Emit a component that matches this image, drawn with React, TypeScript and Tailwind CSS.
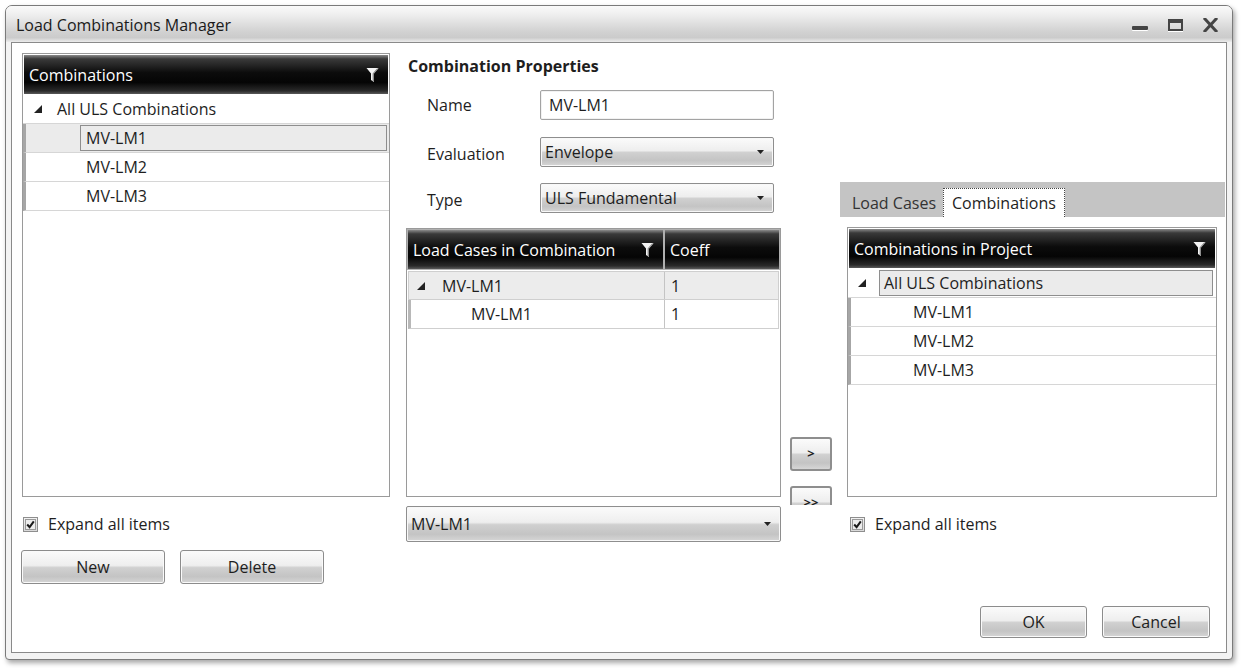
import React from 'react';

const font = { fontFamily: '"Open Sans", "Noto Sans", "Liberation Sans", sans-serif' };

const headBg =
  'bg-[linear-gradient(to_bottom,#8a8a8a_0%,#3a3a3a_10%,#0c0c0c_45%,#050505_70%,#2a2a2a_92%,#5a5a5a_100%)]';
const glossBg =
  'bg-[linear-gradient(to_bottom,#fbfbfb_0%,#eeeeee_45%,#d0d0d0_52%,#c4c4c4_80%,#d6d6d6_100%)]';

function Funnel() {
  return (
    <svg width="13" height="16" viewBox="0 0 13 16">
      <path d="M0.5 1 H12.5 L8 6.5 V15 L5 13 V6.5 Z" fill="#f4f4f4" />
      <path d="M8 6.5 V15 L6.6 14 V6.5 L11 1.6 H12.5 Z" fill="#8e8e8e" />
    </svg>
  );
}

function Expander() {
  return (
    <svg width="8" height="8" viewBox="0 0 8 8">
      <polygon points="8,0 8,8 0,8" fill="#222" />
    </svg>
  );
}

function GridHeader({ title, filter = true }: { title: string; filter?: boolean }) {
  return (
    <div className={`${headBg} h-[39px] flex items-center justify-between pl-[5px] pr-[9px] text-white text-[16px]`}>
      <span>{title}</span>
      {filter && <Funnel />}
    </div>
  );
}

function Checkbox({ label }: { label: string }) {
  return (
    <div className="flex items-center gap-[10px] h-[16px] text-[16px] text-[#1e1e1e]">
      <div className="w-[15px] h-[15px] border border-[#8e8e8e] bg-[linear-gradient(to_bottom,#f2f2f2,#d9d9d9)] flex items-center justify-center p-[1px]">
        <div className="w-full h-full border border-[#9a9a9a] bg-[#ededed] flex items-center justify-center">
          <svg width="9" height="9" viewBox="0 0 9 9">
            <path d="M1.2 4.5 L3.6 7.2 L7.8 1.3" stroke="#1a1a1a" strokeWidth="2" fill="none" />
          </svg>
        </div>
      </div>
      <span>{label}</span>
    </div>
  );
}

function Button({ label, w }: { label: string; w: string }) {
  return (
    <div
      className={`${w} h-full ${glossBg} border border-[#8c8c8c] rounded-[3px] flex items-center justify-center text-[16px] text-[#1e1e1e] shadow-[inset_0_0_0_1px_#fafafa]`}
    >
      {label}
    </div>
  );
}

function Combo({ value, cls }: { value: string; cls: string }) {
  return (
    <div
      className={`${cls} ${glossBg} border border-[#8e8e8e] rounded-[2px] flex items-center justify-between pl-[4px] pr-[9px] text-[16px] text-[#1e1e1e] shadow-[inset_0_0_0_1px_#f8f8f8]`}
    >
      <span>{value}</span>
      <svg width="7" height="4" viewBox="0 0 7 4">
        <polygon points="0,0 7,0 3.5,4" fill="#222" />
      </svg>
    </div>
  );
}

function WindowControls() {
  return (
    <div className="flex items-center gap-[20px] pr-[14px] pt-[2px]">
      <div className="w-[16px] h-[4px] bg-[#444] rounded-[1px] shadow-[0_1px_0_#fff] mt-[6px]" />
      <div className="w-[15px] h-[12px] border-2 border-t-[4px] border-[#444] shadow-[0_1px_0_#fff]" />
      <svg width="15" height="14" viewBox="0 0 15 14">
        <path d="M2 1 L13 13 M13 1 L2 13" stroke="#444" strokeWidth="3" strokeLinecap="square" />
      </svg>
    </div>
  );
}

// tree row used by the combination lists
function ChildRow({ name, selected = false, indent }: { name: string; selected?: boolean; indent: string }) {
  return (
    <div
      className={`h-[29px] flex border-b border-[#d6d6d6] border-l-[3px] border-l-[#a6a6a6] ${selected ? 'bg-[#ebebeb]' : 'bg-white'}`}
    >
      <div className={`${indent} shrink-0`} />
      <div
        className={`flex-1 flex items-center pl-[5px] mr-[2px] my-[1px] ${selected ? 'border border-[#8e8e8e] bg-[#ebebeb]' : 'border border-transparent'}`}
      >
        {name}
      </div>
    </div>
  );
}

export default function App() {
  return (
    <div className="w-[1241px] h-[668px] bg-white overflow-hidden text-[#1e1e1e]" style={font}>
      <div className="ml-[5px] mt-[5px] w-[1228px] h-[655px] flex flex-col rounded-t-[7px] rounded-b-[4px] border border-[#7a7a7a] bg-[#f3f3f3] shadow-[2px_3px_5px_rgba(0,0,0,0.35)]">
        {/* title bar */}
        <div className="h-[36px] shrink-0 flex items-center justify-between rounded-t-[6px] bg-[linear-gradient(to_bottom,#fafafa_0%,#eeeeee_25%,#d2d2d2_70%,#cbcbcb_88%,#ececec_100%)]">
          <span className="pl-[10px] pt-[2px] text-[16px] text-[#1a1a1a]">Load Combinations Manager</span>
          <WindowControls />
        </div>

        <div className="flex-1 mx-[5px] mb-[6px] border border-[#8a8a8a] bg-white flex pt-[10px] pl-[10px]">
          {/* left: combination tree */}
          <div className="w-[368px] flex flex-col">
            <div className="h-[444px] border border-[#9a9a9a] flex flex-col text-[16px]">
              <div className="p-[1px]">
                <GridHeader title="Combinations" />
              </div>
              <div className="h-[29px] flex items-center border-b border-[#d6d6d6] pl-[11px] gap-[15px]">
                <Expander />
                <span>All ULS Combinations</span>
              </div>
              <ChildRow name="MV-LM1" selected indent="w-[54px]" />
              <ChildRow name="MV-LM2" indent="w-[54px]" />
              <ChildRow name="MV-LM3" indent="w-[54px]" />
            </div>
            <div className="mt-[19px] ml-[1px]">
              <Checkbox label="Expand all items" />
            </div>
            <div className="mt-[18px] h-[34px] flex gap-[15px] -ml-[1px]">
              <Button label="New" w="w-[144px]" />
              <Button label="Delete" w="w-[144px]" />
            </div>
          </div>

          {/* middle: properties */}
          <div className="ml-[16px] w-[375px] flex flex-col text-[16px]">
            <div className="mt-[1px] h-[22px] font-bold pl-[2px]">Combination Properties</div>
            <div className="mt-[14px] flex items-center">
              <span className="w-[134px] pl-[21px]">Name</span>
              <div className="w-[234px] h-[30px] border border-[#a3a3a3] rounded-[2px] flex items-center pl-[8px] shadow-[inset_0_0_0_1px_#f2f2f2]">
                MV-LM1
              </div>
            </div>
            <div className="mt-[17px] flex items-center">
              <span className="w-[134px] pl-[21px] pt-[4px]">Evaluation</span>
              <Combo value="Envelope" cls="w-[234px] h-[30px]" />
            </div>
            <div className="mt-[16px] flex items-center">
              <span className="w-[134px] pl-[21px] pt-[4px]">Type</span>
              <Combo value="ULS Fundamental" cls="w-[234px] h-[30px]" />
            </div>
            <div className="mt-[15px] h-[269px] border border-[#9a9a9a] flex flex-col">
              <div className="flex p-[1px] gap-[2px] bg-[#b0b0b0]">
                <div className="w-[255px]">
                  <GridHeader title="Load Cases in Combination" />
                </div>
                <div className="flex-1">
                  <GridHeader title="Coeff" filter={false} />
                </div>
              </div>
              <div className="h-[29px] flex bg-[#ececec] border border-[#cfcfcf] mx-[1px] mt-[1px]">
                <div className="w-[256px] flex items-center gap-[17px] pl-[8px] border-r border-[#c4c4c4]">
                  <Expander />
                  <span>MV-LM1</span>
                </div>
                <div className="flex-1 flex items-center pl-[6px]">1</div>
              </div>
              <div className="h-[29px] flex bg-white border border-[#cfcfcf] border-t-0 border-l-[3px] border-l-[#b8b8b8] mx-[1px]">
                <div className="w-[254px] flex items-center pl-[60px] border-r border-[#c4c4c4]">MV-LM1</div>
                <div className="flex-1 flex items-center pl-[6px]">1</div>
              </div>
            </div>
            <Combo value="MV-LM1" cls="mt-[9px] w-[375px] h-[36px]" />
          </div>

          {/* move buttons */}
          <div className="ml-[9px] w-[42px] h-[452px] overflow-hidden flex flex-col">
            <div className={`mt-[384px] h-[34px] shrink-0 ${glossBg} border-2 border-[#8e8e8e] rounded-[3px] flex items-center justify-center text-[13px] font-bold`}>
              &gt;
            </div>
            <div className={`mt-[15px] h-[34px] shrink-0 ${glossBg} border-2 border-[#8e8e8e] rounded-[3px] flex items-center justify-center text-[13px] font-bold`}>
              &gt;&gt;
            </div>
          </div>

          {/* right: project lists */}
          <div className="ml-[8px] w-[385px] flex flex-col text-[16px]">
            <div className="mt-[129px] h-[35px] bg-[#c4c4c4] flex items-end pl-[5px]">
              <div className="h-[29px] flex items-center px-[7px] text-[#333]">Load Cases</div>
              <div className="h-[29px] bg-white border border-dotted border-[#444] border-b-0 flex items-center px-[8px]">
                Combinations
              </div>
            </div>
            <div className="mt-[10px] ml-[7px] w-[370px] h-[270px] border border-[#9a9a9a] flex flex-col">
              <div className="p-[1px]">
                <GridHeader title="Combinations in Project" />
              </div>
              <div className="h-[29px] flex items-center border-b border-[#d6d6d6] pl-[10px]">
                <Expander />
                <div className="ml-[13px] mr-[3px] flex-1 h-[26px] border border-[#8e8e8e] bg-[#ebebeb] flex items-center pl-[4px]">
                  All ULS Combinations
                </div>
              </div>
              <ChildRow name="MV-LM1" indent="w-[56px]" />
              <ChildRow name="MV-LM2" indent="w-[56px]" />
              <ChildRow name="MV-LM3" indent="w-[56px]" />
            </div>
            <div className="mt-[19px] ml-[10px]">
              <Checkbox label="Expand all items" />
            </div>
            <div className="mt-[74px] h-[32px] flex justify-end gap-[15px] pr-[15px]">
              <Button label="OK" w="w-[107px]" />
              <Button label="Cancel" w="w-[108px]" />
            </div>
          </div>
        </div>
      </div>
    </div>
  );
}
